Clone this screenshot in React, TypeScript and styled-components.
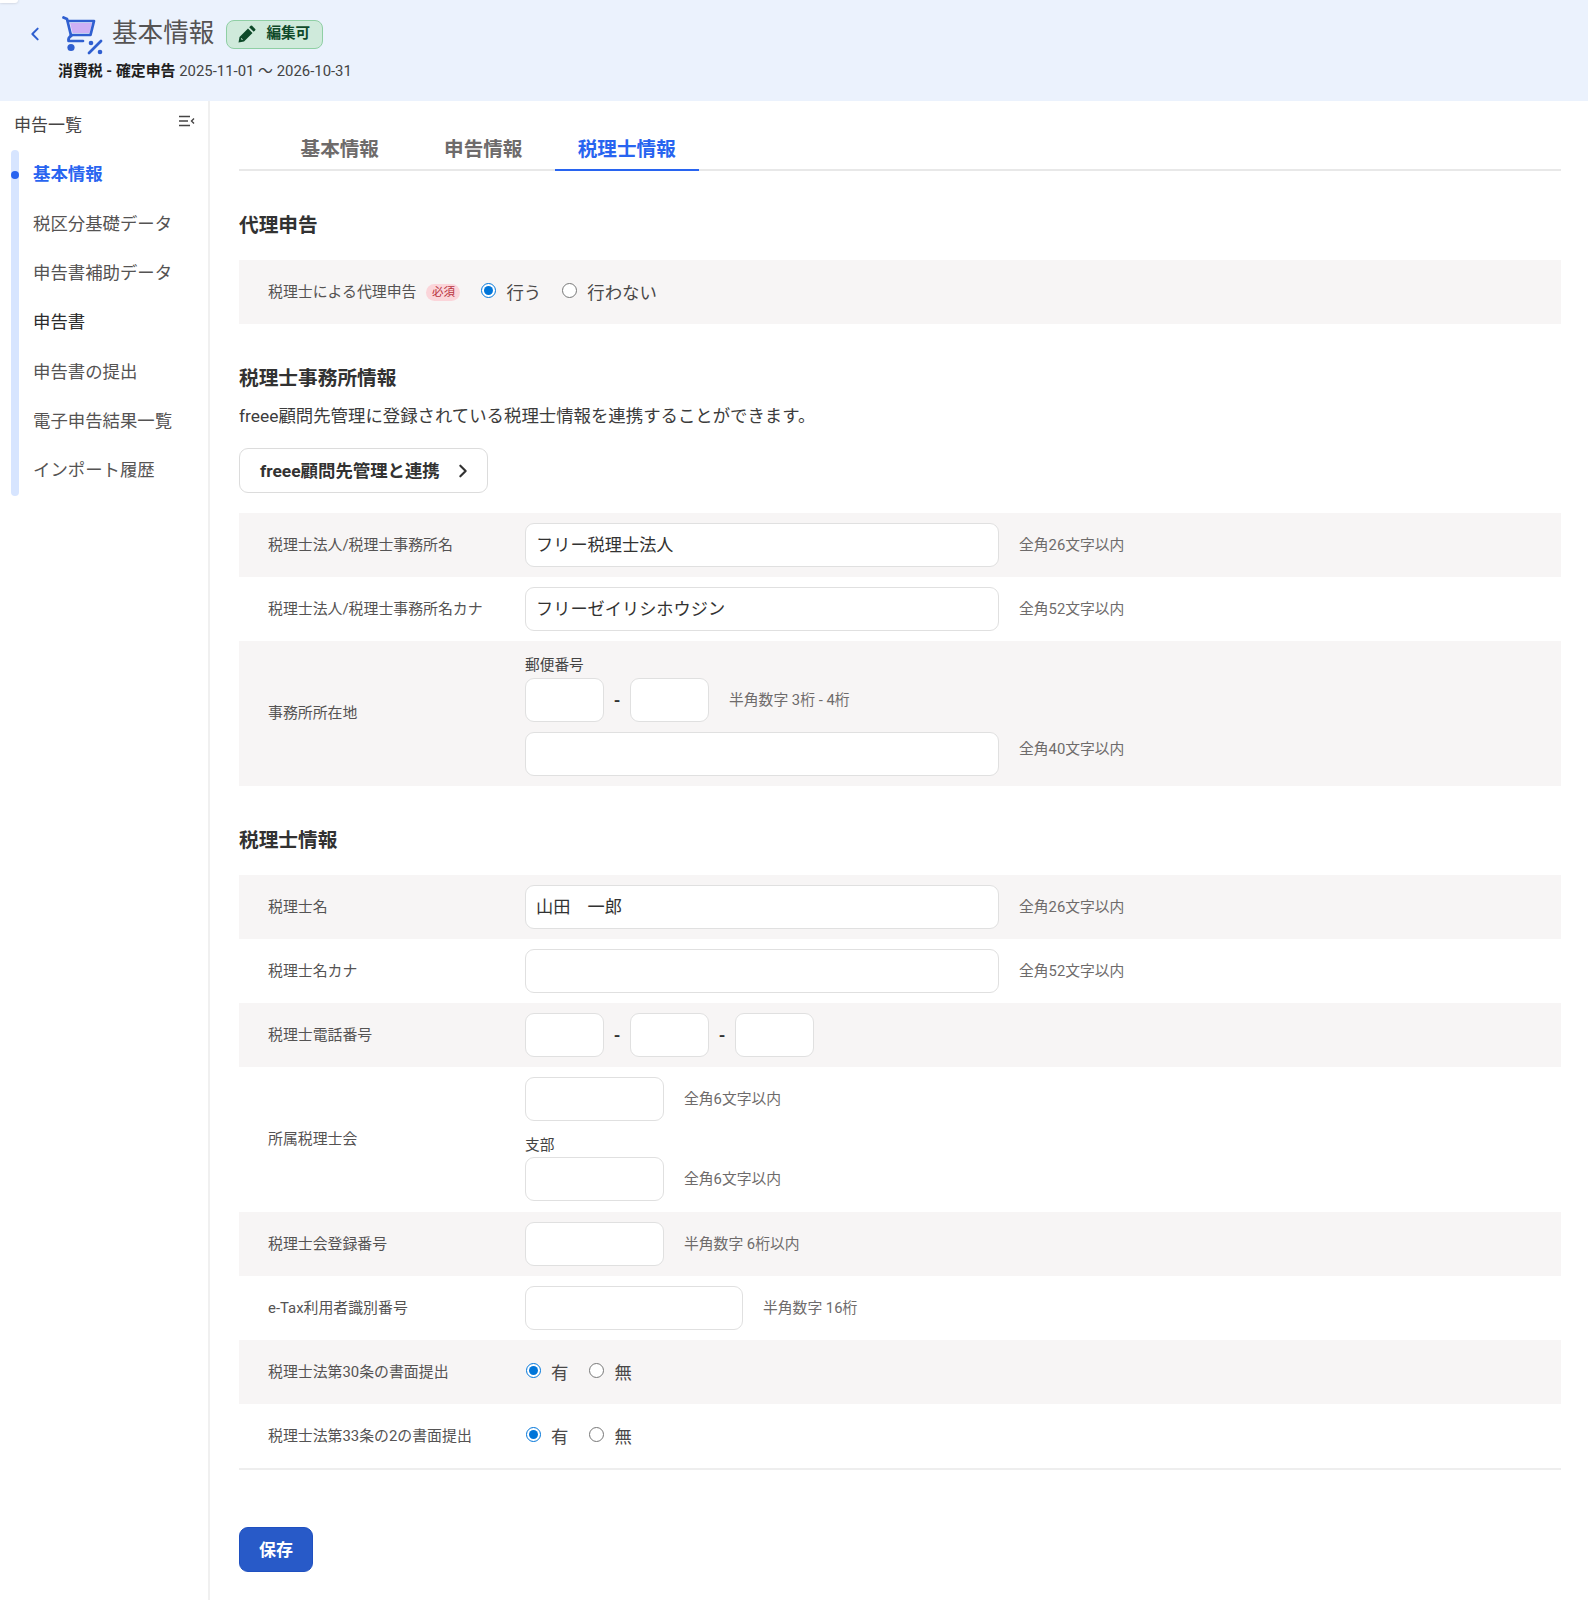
import styled, { createGlobalStyle } from "styled-components";

const GlobalStyle = createGlobalStyle`
  html, body {
    margin: 0;
    padding: 0;
    background: #fff;
  }
  body {
    font-family: Roboto, "Liberation Sans", "Noto Sans CJK JP", sans-serif;
    color: #323232;
  }
  * {
    box-sizing: border-box;
  }
`;

const Page = styled.div`
  position: relative;
  width: 1588px;
  height: 1600px;
  overflow: hidden;
  background: #fff;
`;

const CornerTab = styled.div`
  position: absolute;
  left: 0;
  top: 0;
  width: 18px;
  height: 3px;
  background: #fff;
  border-radius: 0 0 4px 0;
  box-shadow: 0 0 3px rgba(0, 0, 0, 0.2);
`;

const Header = styled.header`
  height: 101px;
  padding: 15px 0 0 29px;
  background: #ebf2fd;
`;

const TitleRow = styled.div`
  display: flex;
  align-items: center;
  height: 40px;
`;

const Back = styled.span`
  display: flex;
  width: 33px;
  margin: -2px 0 0 -2px;
  color: #2f5fd0;
  & + svg {
    margin-left: 2px;
  }
`;

const Title = styled.h1`
  margin: 0 12px 4px 8px;
  font-size: 25.6px;
  font-weight: 400;
  line-height: 36px;
  color: #555353;
`;

const Badge = styled.span`
  display: flex;
  align-items: center;
  gap: 10px;
  width: 97px;
  height: 29px;
  margin-bottom: 2px;
  padding-left: 11px;
  border: 1px solid #8fcfa4;
  border-radius: 8px;
  background: #cfeadb;
  color: #0f4a2a;
  font-size: 14.6px;
  font-weight: 700;
  line-height: 20px;
  span {
    margin-bottom: 2px;
  }
`;

const SubTitle = styled.div`
  margin: 6px 0 0 29px;
  font-size: 14.9px;
  line-height: 20px;
  color: #444;
  b {
    color: #1f1f1f;
  }
`;

const Body = styled.div`
  display: flex;
  height: 1499px;
`;

const Sidebar = styled.aside`
  flex: none;
  width: 210px;
  padding: 13px 0 0 11px;
  border-right: 2px solid #f0f0f0;
`;

const SideTop = styled.div`
  display: flex;
  justify-content: space-between;
  height: 36px;
  padding: 0 13px 0 3px;
  font-size: 17px;
  line-height: 22px;
  color: #464444;
  svg {
    margin-top: 1px;
  }
`;

const Rail = styled.ul`
  display: flow-root;
  position: relative;
  width: 8px;
  height: 346px;
  margin: 0;
  padding: 0;
  list-style: none;
  border-radius: 4px;
  background: #d7e5ff;
`;

const SideItem = styled.li<{ $active?: boolean; $dark?: boolean }>`
  display: flex;
  align-items: center;
  width: 180px;
  height: 49.35px;
  padding-left: 22px;
  font-size: 17.4px;
  white-space: nowrap;
  font-weight: ${(p) => (p.$active ? 700 : 400)};
  color: ${(p) => (p.$active ? "#2864f0" : p.$dark ? "#2b2b2b" : "#555353")};
  &:first-of-type {
    margin-top: -2px;
  }
`;

const Dot = styled.span`
  position: absolute;
  left: 0;
  top: 21px;
  width: 8px;
  height: 8px;
  border-radius: 50%;
  background: #2864f0;
`;

const Main = styled.main`
  flex: none;
  width: 1351px;
  padding: 0 0 0 29px;
`;

const Tabs = styled.nav`
  display: flex;
  height: 70px;
  padding: 29px 0 0 29px;
  border-bottom: 2px solid #e8e8e8;
`;

const Tab = styled.div<{ $active?: boolean }>`
  width: 143.5px;
  height: 41px;
  line-height: 40px;
  text-align: center;
  font-size: 19.6px;
  font-weight: 700;
  color: ${(p) => (p.$active ? "#2864f0" : "#6e6b6b")};
  border-bottom: ${(p) => (p.$active ? "2px solid #2864f0" : "none")};
`;

const SectionTitle = styled.h2<{ $top: number; $bottom: number }>`
  margin: ${(p) => p.$top}px 0 ${(p) => p.$bottom}px;
  font-size: 19.7px;
  font-weight: 700;
  line-height: 28px;
  color: #323232;
`;

const Row = styled.div<{ $tall?: number }>`
  display: flex;
  align-items: center;
  min-height: ${(p) => p.$tall ?? 64}px;
  padding-left: 29px;
  &:nth-child(odd) {
    background: #f7f5f5;
  }
`;

const FormGroup = styled.div<{ $line?: boolean }>`
  ${(p) => (p.$line ? "border-bottom: 2px solid #eee;" : "")}
`;

const Label = styled.div`
  flex: none;
  width: 257px;
  padding-bottom: 4px;
  font-size: 14.9px;
  color: #555353;
`;

const InlineLabel = styled(Label)`
  width: auto;
`;

const Field = styled.div<{ $top?: number }>`
  display: flex;
  flex-direction: column;
  align-self: flex-start;
  padding-top: ${(p) => p.$top ?? 0}px;
`;

const FieldLine = styled.div<{ $gap?: number }>`
  display: flex;
  align-items: center;
  margin-top: ${(p) => p.$gap ?? 0}px;
`;

const SmallLabel = styled.div<{ $top?: number; $bottom?: number }>`
  margin: ${(p) => p.$top ?? 0}px 0 ${(p) => p.$bottom ?? 0}px;
  font-size: 14.7px;
  line-height: 18px;
  color: #444;
`;

const TextInput = styled.input<{ $w: number }>`
  width: ${(p) => p.$w}px;
  height: 44px;
  padding: 0 10px 4px;
  border: 1px solid #e0e0e0;
  border-radius: 9px;
  background: #fff;
  color: #323232;
  font-family: inherit;
  font-size: 17.2px;
  outline: none;
`;

const Hint = styled.span<{ $raise?: number }>`
  margin-left: 20px;
  padding-bottom: ${(p) => p.$raise ?? 4}px;
  font-size: 14.8px;
  color: #6e6b6b;
  white-space: nowrap;
`;

const Dash = styled.span`
  width: 26px;
  text-align: center;
  font-size: 17px;
  font-weight: 700;
  color: #323232;
`;

const Required = styled.span`
  width: 34px;
  height: 17px;
  margin: 0 20px 0 10px;
  border-radius: 9px;
  background: #fbd5da;
  color: #b8323f;
  font-size: 11.5px;
  line-height: 17px;
  text-align: center;
`;

const RadioLabel = styled.label<{ $gap: number }>`
  display: flex;
  align-items: center;
  margin-right: ${(p) => p.$gap}px;
  padding-bottom: 2px;
  font-size: 17.4px;
  color: #4a4848;
  input {
    width: 15px;
    height: 15px;
    margin: -1px 10px 0 1px;
    accent-color: #0075d9;
  }
`;

const Desc = styled.p`
  margin: 0 0 20px;
  font-size: 17.4px;
  line-height: 24px;
  color: #3c3c3c;
`;

const LinkButton = styled.button`
  display: flex;
  align-items: center;
  justify-content: space-between;
  width: 249px;
  height: 45px;
  margin-bottom: 20px;
  padding: 0 16px 2px 20px;
  border: 1px solid #dcdcdc;
  border-radius: 9px;
  background: #fff;
  color: #323232;
  font-family: inherit;
  font-size: 17.4px;
  font-weight: 700;
  svg {
    margin-top: 2px;
  }
`;

const SaveButton = styled.button`
  display: block;
  width: 74px;
  height: 45px;
  margin-top: 57px;
  padding-bottom: 3px;
  border: 1px solid #1f50c0;
  border-radius: 9px;
  background: #285ac8;
  color: #fff;
  font-family: inherit;
  font-size: 17px;
  font-weight: 700;
`;

function CartIcon() {
  return (
    <svg width="42" height="40" viewBox="0 0 42 40" fill="none">
      <path d="M8 8H30L27.500 18H10.500Z" fill="#cdb0f5" />
      <g stroke="#2f5fd0" strokeWidth="2.7" strokeLinecap="round" strokeLinejoin="round">
        <path d="M1.500 2.500L5 4L9 20.500" />
        <path d="M6 6H32L28.500 20H9" />
        <path d="M9.500 20.500C7 22 6 23.500 6.500 26H21" />
        <path d="M27 38L39 26" strokeWidth="2.800" />
      </g>
      <circle cx="9" cy="32.500" r="3.600" fill="#2f5fd0" />
      <circle cx="29" cy="28" r="2.300" fill="#2f5fd0" />
      <circle cx="38" cy="37" r="2.300" fill="#2f5fd0" />
    </svg>
  );
}

function PencilIcon() {
  return (
    <svg width="18" height="18" viewBox="0 0 18 18" fill="#0f4a2a">
      <path d="M0.500 17.500L1.500 12L10 3.500L14.500 8L6 16.500ZM3 14L4 15L4.900 14.600L3.400 13.100Z" fillRule="evenodd" />
      <path d="M11.200 2.300L12.700 0.800A1 1 0 0 1 14.100 0.800L17.200 3.900A1 1 0 0 1 17.200 5.300L15.700 6.800Z" />
    </svg>
  );
}

function CollapseIcon() {
  return (
    <svg width="16" height="12" viewBox="0 0 16 12" fill="none" stroke="#464444" strokeWidth="1.400">
      <path d="M0 1.500H11M0 6H9M0 10.500H11" />
      <path d="M15 3.500L12.500 6L15 8.500" />
    </svg>
  );
}

function Chevron({ left, size, width }: { left?: boolean; size: number; width: number }) {
  return (
    <svg width={size} height={size} viewBox="0 0 12 12" fill="none" stroke="currentColor" strokeWidth={width}>
      <path d={left ? "M8 2L4 6L8 10" : "M4 2L8 6L4 10"} strokeLinecap="round" strokeLinejoin="round" />
    </svg>
  );
}

function YesNo({ name }: { name: string }) {
  return (
    <>
      <RadioLabel $gap={20}>
        <input type="radio" name={name} defaultChecked />有
      </RadioLabel>
      <RadioLabel $gap={0}>
        <input type="radio" name={name} />無
      </RadioLabel>
    </>
  );
}

const sideItems = [
  "基本情報",
  "税区分基礎データ",
  "申告書補助データ",
  "申告書",
  "申告書の提出",
  "電子申告結果一覧",
  "インポート履歴",
];

function App() {
  return (
    <Page>
      <GlobalStyle />
      <CornerTab />
      <Header>
        <TitleRow>
          <Back>
            <Chevron left size={16} width={1.5} />
          </Back>
          <CartIcon />
          <Title>基本情報</Title>
          <Badge>
            <PencilIcon />
            <span>編集可</span>
          </Badge>
        </TitleRow>
        <SubTitle>
          <b>消費税 - 確定申告</b> 2025-11-01 ～ 2026-10-31
        </SubTitle>
      </Header>
      <Body>
        <Sidebar>
          <SideTop>
            申告一覧
            <CollapseIcon />
          </SideTop>
          <Rail>
            <Dot />
            {sideItems.map((item, i) => (
              <SideItem key={item} $active={i === 0} $dark={i === 3}>
                {item}
              </SideItem>
            ))}
          </Rail>
        </Sidebar>
        <Main>
          <Tabs>
            <Tab>基本情報</Tab>
            <Tab>申告情報</Tab>
            <Tab $active>税理士情報</Tab>
          </Tabs>

          <SectionTitle $top={41} $bottom={20}>
            代理申告
          </SectionTitle>
          <FormGroup>
            <Row>
              <InlineLabel>税理士による代理申告</InlineLabel>
              <Required>必須</Required>
              <RadioLabel $gap={20}>
                <input type="radio" name="agent" defaultChecked />
                行う
              </RadioLabel>
              <RadioLabel $gap={0}>
                <input type="radio" name="agent" />
                行わない
              </RadioLabel>
            </Row>
          </FormGroup>

          <SectionTitle $top={41} $bottom={11}>
            税理士事務所情報
          </SectionTitle>
          <Desc>freee顧問先管理に登録されている税理士情報を連携することができます。</Desc>
          <LinkButton>
            freee顧問先管理と連携
            <Chevron size={16} width={1.6} />
          </LinkButton>
          <FormGroup>
            <Row>
              <Label>税理士法人/税理士事務所名</Label>
              <TextInput $w={474} defaultValue="フリー税理士法人" />
              <Hint>全角26文字以内</Hint>
            </Row>
            <Row>
              <Label>税理士法人/税理士事務所名カナ</Label>
              <TextInput $w={474} defaultValue="フリーゼイリシホウジン" />
              <Hint>全角52文字以内</Hint>
            </Row>
            <Row $tall={145}>
              <Label>事務所所在地</Label>
              <Field $top={15}>
                <SmallLabel $bottom={4}>郵便番号</SmallLabel>
                <FieldLine>
                  <TextInput $w={79} />
                  <Dash>-</Dash>
                  <TextInput $w={79} />
                  <Hint>半角数字 3桁 - 4桁</Hint>
                </FieldLine>
                <FieldLine $gap={10}>
                  <TextInput $w={474} />
                  <Hint $raise={14}>全角40文字以内</Hint>
                </FieldLine>
              </Field>
            </Row>
          </FormGroup>

          <SectionTitle $top={41} $bottom={20}>
            税理士情報
          </SectionTitle>
          <FormGroup $line>
            <Row>
              <Label>税理士名</Label>
              <TextInput $w={474} defaultValue="山田　一郎" />
              <Hint>全角26文字以内</Hint>
            </Row>
            <Row>
              <Label>税理士名カナ</Label>
              <TextInput $w={474} />
              <Hint>全角52文字以内</Hint>
            </Row>
            <Row>
              <Label>税理士電話番号</Label>
              <TextInput $w={79} />
              <Dash>-</Dash>
              <TextInput $w={79} />
              <Dash>-</Dash>
              <TextInput $w={79} />
            </Row>
            <Row $tall={145}>
              <Label>所属税理士会</Label>
              <Field $top={10}>
                <FieldLine>
                  <TextInput $w={139} />
                  <Hint>全角6文字以内</Hint>
                </FieldLine>
                <SmallLabel $top={15} $bottom={3}>
                  支部
                </SmallLabel>
                <FieldLine>
                  <TextInput $w={139} />
                  <Hint>全角6文字以内</Hint>
                </FieldLine>
              </Field>
            </Row>
            <Row>
              <Label>税理士会登録番号</Label>
              <TextInput $w={139} />
              <Hint>半角数字 6桁以内</Hint>
            </Row>
            <Row>
              <Label>e-Tax利用者識別番号</Label>
              <TextInput $w={218} />
              <Hint>半角数字 16桁</Hint>
            </Row>
            <Row>
              <Label>税理士法第30条の書面提出</Label>
              <YesNo name="art30" />
            </Row>
            <Row>
              <Label>税理士法第33条の2の書面提出</Label>
              <YesNo name="art33" />
            </Row>
          </FormGroup>
          <SaveButton>保存</SaveButton>
        </Main>
      </Body>
    </Page>
  );
}

export default App;
